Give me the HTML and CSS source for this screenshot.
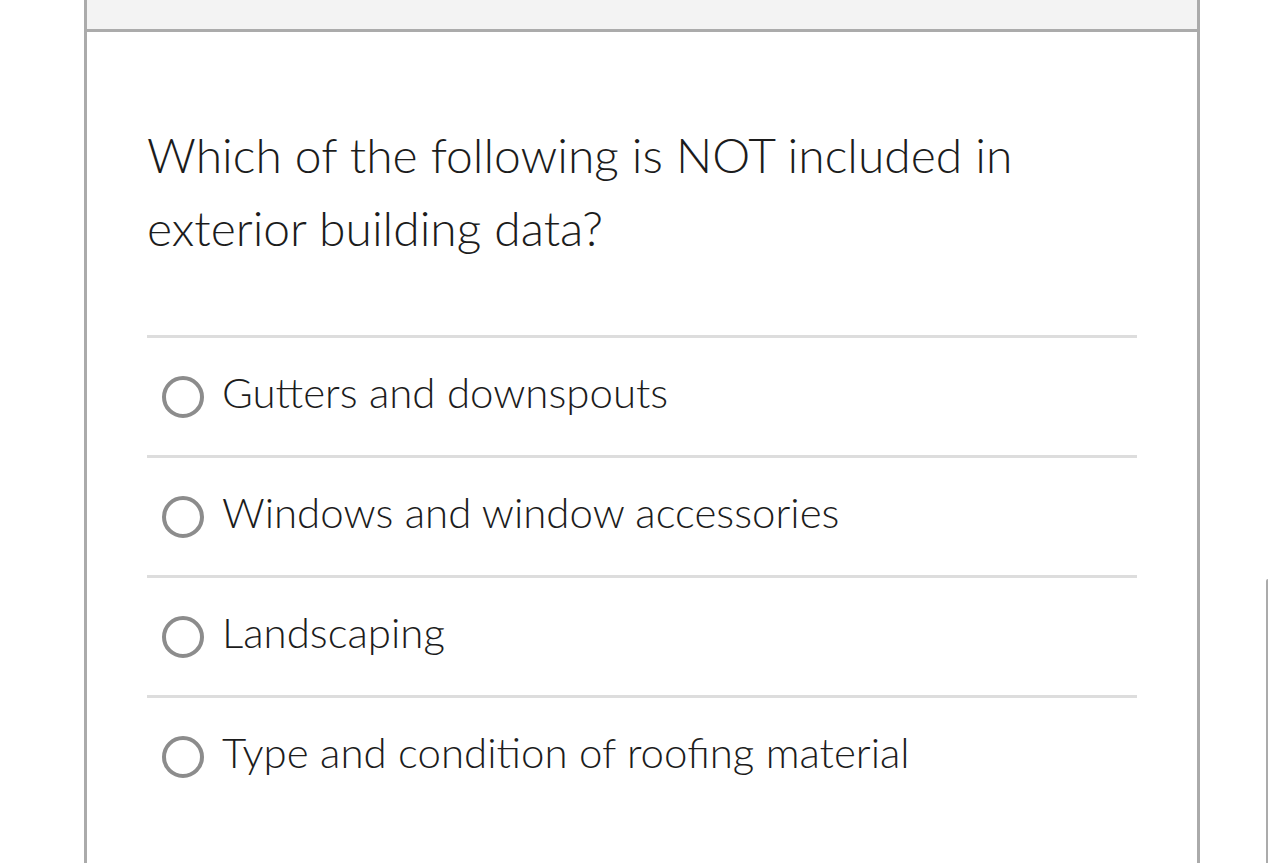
FILE: index.html
```html
<!DOCTYPE html>
<html>
<head>
<meta charset="utf-8">
<link rel="stylesheet" href="styles.css">
</head>
<body>
<div class="card">
  <div class="card-head"></div>
  <div class="card-body">
    <div class="question">Which of the following is NOT included in exterior building data?</div>
    <ul class="options">
      <li class="option"><span class="radio"></span><span class="label">Gutters and downspouts</span></li>
      <li class="option"><span class="radio"></span><span class="label">Windows and window accessories</span></li>
      <li class="option"><span class="radio"></span><span class="label">Landscaping</span></li>
      <li class="option"><span class="radio"></span><span class="label">Type and condition of roofing material</span></li>
    </ul>
  </div>
</div>
<div class="edge"></div>
</body>
</html>
```
FILE: styles.css
```css
html, body {
  margin: 0;
  padding: 0;
  background: #fff;
  height: 100%;
  overflow: hidden;
}
body {
  font-family: Lato, "Open Sans", sans-serif;
  color: #1c1c1c;
  position: relative;
}
.card {
  margin-left: 84px;
  width: 1110px;
  height: 863px;
  border-left: 3px solid #ababab;
  border-right: 3px solid #ababab;
  box-sizing: content-box;
}
.card-head {
  height: 29px;
  background: #f3f3f3;
  border-bottom: 3px solid #ababab;
}
.card-body {
  padding: 0 60px;
}
.question {
  font-size: 48px;
  font-weight: 300;
  line-height: 73px;
  padding-top: 86px;
  width: 900px;
}
.options {
  list-style: none;
  margin: 71px 0 0;
  padding: 0;
}
.option {
  display: flex;
  align-items: center;
  height: 117px;
  border-top: 3px solid #dddddd;
}
.radio {
  width: 34px;
  height: 34px;
  border: 4px solid #8c8c8c;
  border-radius: 50%;
  margin-left: 15px;
  margin-right: 18px;
  flex: none;
}
.label {
  font-size: 42px;
  font-weight: 300;
  margin-bottom: 10px;
}
.edge {
  position: absolute;
  right: 0;
  top: 579px;
  width: 2px;
  height: 300px;
  background: #ababab;
  border-top-left-radius: 2px;
}
```
